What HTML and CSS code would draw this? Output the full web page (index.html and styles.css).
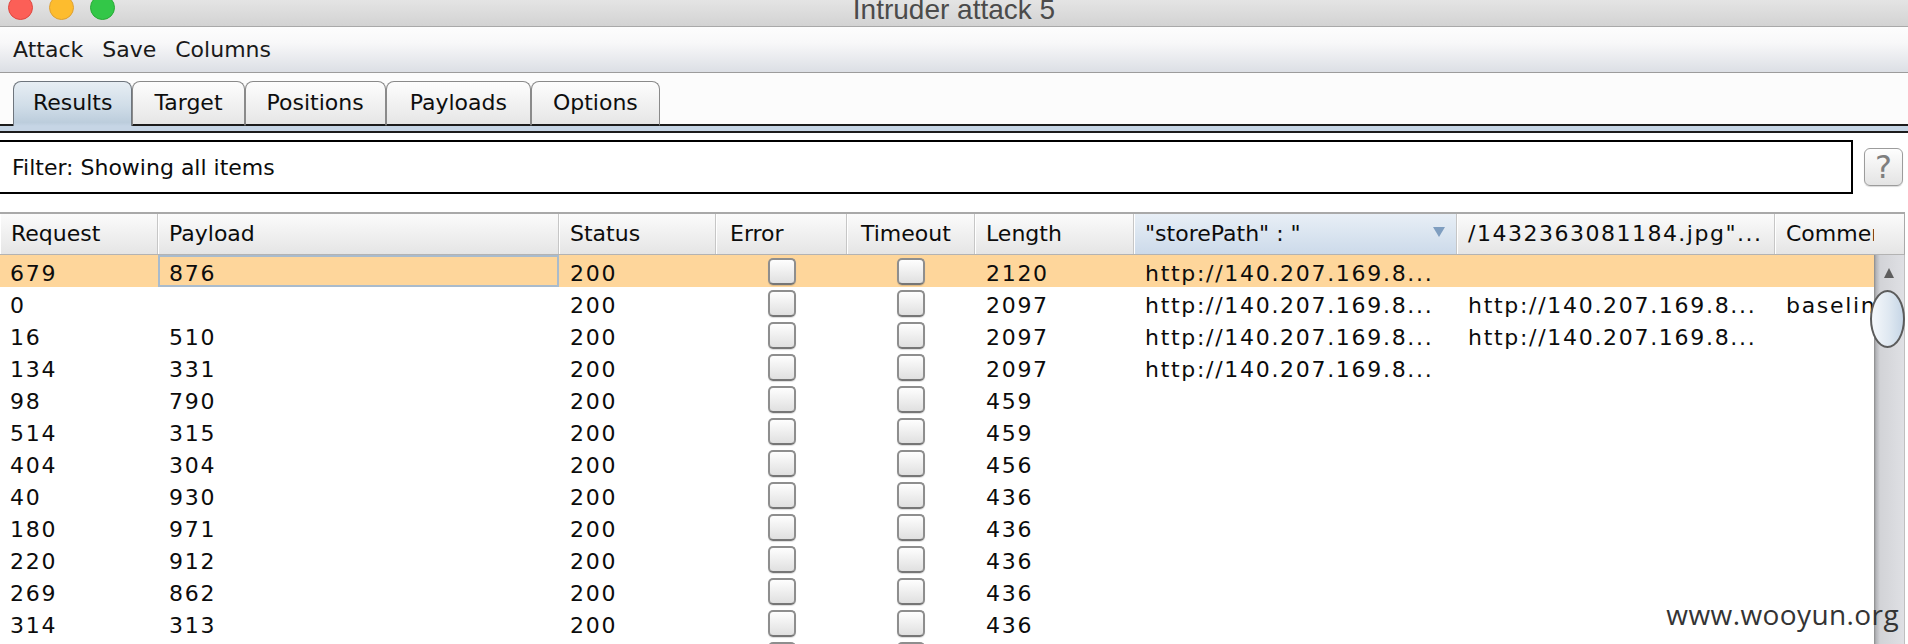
FILE: index.html
```html
<!DOCTYPE html>
<html>
<head>
<meta charset="utf-8">
<title>Intruder attack 5</title>
<link rel="stylesheet" href="styles.css">
</head>
<body>
<div class="window">
  <header class="titlebar">
    <div class="lights">
      <span class="light red"></span>
      <span class="light yellow"></span>
      <span class="light green"></span>
    </div>
    <div class="title">Intruder attack 5</div>
    <div></div>
  </header>

  <nav class="menubar">
    <span>Attack</span><span>Save</span><span>Columns</span>
  </nav>

  <div class="tabs">
    <div class="tab-lead"></div>
    <div class="tab selected">Results</div>
    <div class="tab">Target</div>
    <div class="tab">Positions</div>
    <div class="tab wide">Payloads</div>
    <div class="tab">Options</div>
    <div class="tab-fill"></div>
  </div>
  <div class="tab-band"></div>

  <div class="filter-row">
    <div class="filter">Filter: Showing all items</div>
    <div class="help">?</div>
  </div>

  <div class="results">
    <div class="thead-viewport">
      <div class="cols thead">
        <div class="th">Request</div>
        <div class="th">Payload</div>
        <div class="th">Status</div>
        <div class="th inset">Error</div>
        <div class="th inset">Timeout</div>
        <div class="th">Length</div>
        <div class="th sorted"><span>"storePath" : "</span>
          <svg class="sort-arrow" width="12" height="10" viewBox="0 0 12 10"><polygon points="0,0 12,0 6,10" fill="#7f9ec0"/></svg>
        </div>
        <div class="th spaced">/1432363081184.jpg"...</div>
        <div class="th">Comment</div>
      </div>
    </div>
    <div class="corner"></div>

    <div class="tbody-viewport">
      <div class="cols tr selected">
        <div class="td">679</div><div class="td focus">876</div><div class="td">200</div>
        <div class="td check"><span class="box"></span></div><div class="td check"><span class="box"></span></div>
        <div class="td">2120</div><div class="td">http://140.207.169.8...</div><div class="td"></div><div class="td"></div>
      </div>
      <div class="cols tr">
        <div class="td">0</div><div class="td"></div><div class="td">200</div>
        <div class="td check"><span class="box"></span></div><div class="td check"><span class="box"></span></div>
        <div class="td">2097</div><div class="td">http://140.207.169.8...</div><div class="td">http://140.207.169.8...</div><div class="td">baseline</div>
      </div>
      <div class="cols tr">
        <div class="td">16</div><div class="td">510</div><div class="td">200</div>
        <div class="td check"><span class="box"></span></div><div class="td check"><span class="box"></span></div>
        <div class="td">2097</div><div class="td">http://140.207.169.8...</div><div class="td">http://140.207.169.8...</div><div class="td"></div>
      </div>
      <div class="cols tr">
        <div class="td">134</div><div class="td">331</div><div class="td">200</div>
        <div class="td check"><span class="box"></span></div><div class="td check"><span class="box"></span></div>
        <div class="td">2097</div><div class="td">http://140.207.169.8...</div><div class="td"></div><div class="td"></div>
      </div>
      <div class="cols tr">
        <div class="td">98</div><div class="td">790</div><div class="td">200</div>
        <div class="td check"><span class="box"></span></div><div class="td check"><span class="box"></span></div>
        <div class="td">459</div><div class="td"></div><div class="td"></div><div class="td"></div>
      </div>
      <div class="cols tr">
        <div class="td">514</div><div class="td">315</div><div class="td">200</div>
        <div class="td check"><span class="box"></span></div><div class="td check"><span class="box"></span></div>
        <div class="td">459</div><div class="td"></div><div class="td"></div><div class="td"></div>
      </div>
      <div class="cols tr">
        <div class="td">404</div><div class="td">304</div><div class="td">200</div>
        <div class="td check"><span class="box"></span></div><div class="td check"><span class="box"></span></div>
        <div class="td">456</div><div class="td"></div><div class="td"></div><div class="td"></div>
      </div>
      <div class="cols tr">
        <div class="td">40</div><div class="td">930</div><div class="td">200</div>
        <div class="td check"><span class="box"></span></div><div class="td check"><span class="box"></span></div>
        <div class="td">436</div><div class="td"></div><div class="td"></div><div class="td"></div>
      </div>
      <div class="cols tr">
        <div class="td">180</div><div class="td">971</div><div class="td">200</div>
        <div class="td check"><span class="box"></span></div><div class="td check"><span class="box"></span></div>
        <div class="td">436</div><div class="td"></div><div class="td"></div><div class="td"></div>
      </div>
      <div class="cols tr">
        <div class="td">220</div><div class="td">912</div><div class="td">200</div>
        <div class="td check"><span class="box"></span></div><div class="td check"><span class="box"></span></div>
        <div class="td">436</div><div class="td"></div><div class="td"></div><div class="td"></div>
      </div>
      <div class="cols tr">
        <div class="td">269</div><div class="td">862</div><div class="td">200</div>
        <div class="td check"><span class="box"></span></div><div class="td check"><span class="box"></span></div>
        <div class="td">436</div><div class="td"></div><div class="td"></div><div class="td"></div>
      </div>
      <div class="cols tr">
        <div class="td">314</div><div class="td">313</div><div class="td">200</div>
        <div class="td check"><span class="box"></span></div><div class="td check"><span class="box"></span></div>
        <div class="td">436</div><div class="td"></div><div class="td"></div><div class="td"></div>
      </div>
      <div class="cols tr">
        <div class="td"></div><div class="td"></div><div class="td"></div>
        <div class="td check"><span class="box"></span></div><div class="td check"><span class="box"></span></div>
        <div class="td"></div><div class="td"></div><div class="td"></div><div class="td"></div>
      </div>
    </div>

    <div class="scrollbar">
      <svg class="arrow-up" width="10" height="10" viewBox="0 0 10 10"><polygon points="5,0 10,10 0,10" fill="#5e5e5e"/></svg>
      <div class="thumb"></div>
    </div>
  </div>

  <div class="watermark">www.wooyun.org</div>
</div>
</body>
</html>
```

FILE: styles.css
```css
html, body {
  margin: 0;
  padding: 0;
}

body {
  width: 1908px;
  height: 644px;
  overflow: hidden;
  background: #ffffff;
  font-family: "DejaVu Sans", "Liberation Sans", sans-serif;
  font-size: 22px;
  color: #0c0c0c;
}

.window {
  position: relative;
  width: 1908px;
  height: 644px;
  overflow: hidden;
  display: flex;
  flex-direction: column;
}

/* ---------- title bar ---------- */
.titlebar {
  flex: 0 0 27px;
  height: 27px;
  box-sizing: border-box;
  border-bottom: 1px solid #a9a9a9;
  background: linear-gradient(#e4e4e4, #d3d3d3);
  display: grid;
  grid-template-columns: 1fr auto 1fr;
  overflow: hidden;
}

.lights {
  display: flex;
  gap: 16px;
  margin-top: -5px;
  padding-left: 8px;
}

.light {
  width: 25px;
  height: 25px;
  border-radius: 50%;
  box-sizing: border-box;
}

.light.red { background: #fc5f57; border: 1px solid #de4740; }
.light.yellow { background: #fdbc2e; border: 1px solid #dea033; }
.light.green { background: #33c748; border: 1px solid #27aa35; }

.title {
  font-family: "Liberation Sans", Arial, sans-serif;
  font-size: 28px;
  line-height: 28px;
  margin-top: -4px;
  color: #4b4b4b;
  white-space: nowrap;
}

/* ---------- menu bar ---------- */
.menubar {
  flex: 0 0 46px;
  height: 46px;
  box-sizing: border-box;
  border-bottom: 1px solid #9c9c9c;
  background: linear-gradient(#fdfdfd 0%, #f8f8f9 35%, #dcdfe5 100%);
  display: flex;
  gap: 19px;
  padding-left: 13px;
  line-height: 45px;
  color: #1a1a1a;
}

/* ---------- tabs ---------- */
.tabs {
  flex: 0 0 53px;
  height: 53px;
  display: flex;
  align-items: flex-end;
  background: #fcfcfc;
}

.tab-lead {
  width: 13px;
  border-bottom: 2px solid #1c1c1c;
}

.tab-fill {
  flex: 1;
  border-bottom: 2px solid #1c1c1c;
}

.tab {
  height: 45px;
  box-sizing: border-box;
  padding: 0 21px;
  border: 1px solid #8a8a8a;
  border-bottom: 2px solid #1c1c1c;
  border-radius: 8px 8px 0 0;
  background: linear-gradient(#fdfdfd, #e6e6e6);
  line-height: 42px;
  color: #0e0e0e;
  white-space: nowrap;
}

.tab.wide {
  padding: 0 23px;
}

.tab.selected {
  padding: 0 19px 2px;
  border-color: #6e757d;
  border-bottom: 0;
  background: linear-gradient(#e7eef4 0%, #d0dde8 55%, #bccddc 92%, #c6d5e5 100%);
}

.tab-band {
  flex: 0 0 7px;
  height: 7px;
  box-sizing: border-box;
  background: #c6d5e5;
  border-bottom: 2px solid #1c1c1c;
}

/* ---------- filter ---------- */
.filter-row {
  flex: 0 0 54px;
  height: 54px;
  margin-top: 7px;
  display: flex;
  align-items: center;
}

.filter {
  flex: 1;
  height: 54px;
  box-sizing: border-box;
  border: 2px solid #000000;
  border-left: 0;
  padding: 2px 0 0 12px;
  line-height: 48px;
  background: #ffffff;
}

.help {
  width: 39px;
  height: 38px;
  box-sizing: border-box;
  margin: 0 5px 0 11px;
  border: 1px solid #9c9c9c;
  border-radius: 6px;
  background: linear-gradient(#fefefe, #e4e4e4);
  box-shadow: 0 1px 1px rgba(0, 0, 0, 0.15);
  color: #7e7e7e;
  font-size: 32px;
  line-height: 36px;
  text-align: center;
}

/* ---------- results table ---------- */
.results {
  flex: 1;
  min-height: 0;
  margin-top: 18px;
  width: 1905px;
  display: grid;
  grid-template-columns: 1874px 31px;
  grid-template-rows: 43px 1fr;
}

.cols {
  display: grid;
  grid-template-columns: 158px 401px 157px 131px 128px 159px 323px 318px 220px;
}

.thead-viewport,
.tbody-viewport {
  overflow: hidden;
}

.thead {
  height: 43px;
  box-sizing: border-box;
  border-top: 2px solid #a9a9a9;
  border-bottom: 1px solid #b3b3b3;
  background: linear-gradient(#fbfbfb, #e5e5e5);
}

.th {
  padding-left: 11px;
  line-height: 40px;
  border-right: 1px solid #c6c6c6;
  box-shadow: inset 1px 0 0 #ffffff;
  white-space: nowrap;
  overflow: hidden;
}

.th.inset {
  padding-left: 14px;
}

.th.sorted {
  display: flex;
  align-items: center;
  justify-content: space-between;
  padding-right: 11px;
  background: linear-gradient(#e8eff6, #ccdaea);
}

.th.spaced {
  letter-spacing: 1.5px;
}

.sort-arrow {
  flex: 0 0 auto;
  margin-top: -4px;
}

.corner {
  box-sizing: border-box;
  border-top: 2px solid #a9a9a9;
  border-bottom: 1px solid #b3b3b3;
  border-right: 1px solid #a9a9a9;
  background: linear-gradient(#fbfbfb, #e5e5e5);
}

.tr {
  height: 32px;
}

.tr.selected {
  background: #fed69b;
}

.td {
  height: 32px;
  box-sizing: border-box;
  padding: 3px 0 0 11px;
  line-height: 32px;
  letter-spacing: 1.7px;
  white-space: nowrap;
  overflow: hidden;
}

.td:first-child {
  padding-left: 10px;
}

.td.focus {
  border: 2px solid #a9bbcc;
  padding: 1px 0 0 9px;
}

.td.check {
  display: flex;
  justify-content: center;
  align-items: flex-start;
  padding: 3px 0 0 0;
}

.box {
  width: 28px;
  height: 27px;
  box-sizing: border-box;
  border: 2px solid #8e8e8e;
  border-bottom-color: #767676;
  border-radius: 5px;
  background: linear-gradient(#fefefe, #e0e0e0);
  box-shadow: 0 1px 1px rgba(0, 0, 0, 0.14);
}

/* ---------- scrollbar ---------- */
.scrollbar {
  position: relative;
  display: flex;
  flex-direction: column;
  align-items: center;
  padding-top: 13px;
  box-sizing: border-box;
  border-right: 1px solid #bfbfbf;
  background: linear-gradient(to right, #8a8a8a 0px, #b3b4b8 2px, #d2d3d7 6px, #dfe0e4 100%);
}

.arrow-up {
  display: block;
}

.thumb {
  position: absolute;
  left: -4px;
  top: 35px;
  width: 35px;
  height: 58px;
  box-sizing: border-box;
  border: 2px solid #5c5c5c;
  border-radius: 50%;
  background: linear-gradient(to right, #f5f8fb, #dfe8f1 55%, #c6d6e6);
}

/* ---------- watermark ---------- */
.watermark {
  position: absolute;
  right: 9px;
  top: 600px;
  font-family: "Open Sans", "DejaVu Sans", sans-serif;
  font-size: 28px;
  line-height: 28px;
  letter-spacing: 0.4px;
  color: #343434;
  white-space: nowrap;
}
```
